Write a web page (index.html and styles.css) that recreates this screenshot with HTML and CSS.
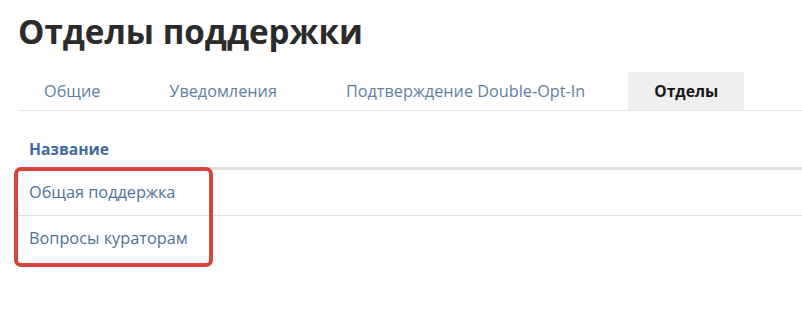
FILE: index.html
```html
<!DOCTYPE html>
<html lang="ru">
<head>
<meta charset="utf-8">
<title>Отделы поддержки</title>
<link rel="stylesheet" href="styles.css">
</head>
<body>
<div class="page">
  <h1 class="title">Отделы поддержки</h1>
  <ul class="tabs">
    <li class="tab">Общие</li>
    <li class="tab">Уведомления</li>
    <li class="tab">Подтверждение Double-Opt-In</li>
    <li class="tab tab-active">Отделы</li>
  </ul>
  <div class="table-wrap">
    <table class="table">
      <thead>
        <tr><th class="th">Название</th></tr>
      </thead>
      <tbody>
        <tr class="row"><td class="td">Общая поддержка</td></tr>
        <tr class="row"><td class="td">Вопросы кураторам</td></tr>
      </tbody>
    </table>
    <div class="highlight"></div>
  </div>
</div>
</body>
</html>
```
FILE: styles.css
```css
html, body {
  margin: 0;
  padding: 0;
  background: #ffffff;
}
body {
  font-family: "Open Sans", "Liberation Sans", sans-serif;
  color: #333;
  min-height: 316px;
}
.page {
  padding: 0 0 60px 18px;
}
.title {
  margin: 0;
  padding-top: 10px;
  height: 72px;
  box-sizing: border-box;
  font-size: 33.2px;
  line-height: 44px;
  font-weight: 700;
  color: #2b2b2b;
}
.tabs {
  list-style: none;
  margin: 0;
  padding: 0;
  display: flex;
  gap: 17px;
  border-bottom: 1px solid #e6e6e6;
  height: 38px;
}
.tab {
  padding: 0 26px;
  height: 38px;
  line-height: 38px;
  font-size: 16.25px;
  color: #5f7f9f;
}
.tab-active {
  background: #efefef;
  color: #161616;
  font-weight: 700;
  font-size: 15.6px;
}
.table-wrap {
  position: relative;
}
.table {
  width: 100%;
  border-collapse: collapse;
}
.th {
  text-align: left;
  height: 57px;
  padding: 0 0 7px 11px;
  box-sizing: border-box;
  vertical-align: bottom;
  font-size: 15.6px;
  font-weight: 700;
  color: #3e6c9a;
  border-bottom: 3px solid #e0e0e0;
}
.td {
  height: 45px;
  padding: 0 0 0 11px;
  font-size: 16.3px;
  color: #4f729a;
  border-bottom: 1px solid #e3e3e3;
}
.row:last-child .td {
  border-bottom: none;
}
.highlight {
  position: absolute;
  left: -4px;
  top: 56px;
  width: 199px;
  height: 100px;
  box-sizing: border-box;
  border: 4px solid #d8433a;
  border-radius: 7px;
}
```
